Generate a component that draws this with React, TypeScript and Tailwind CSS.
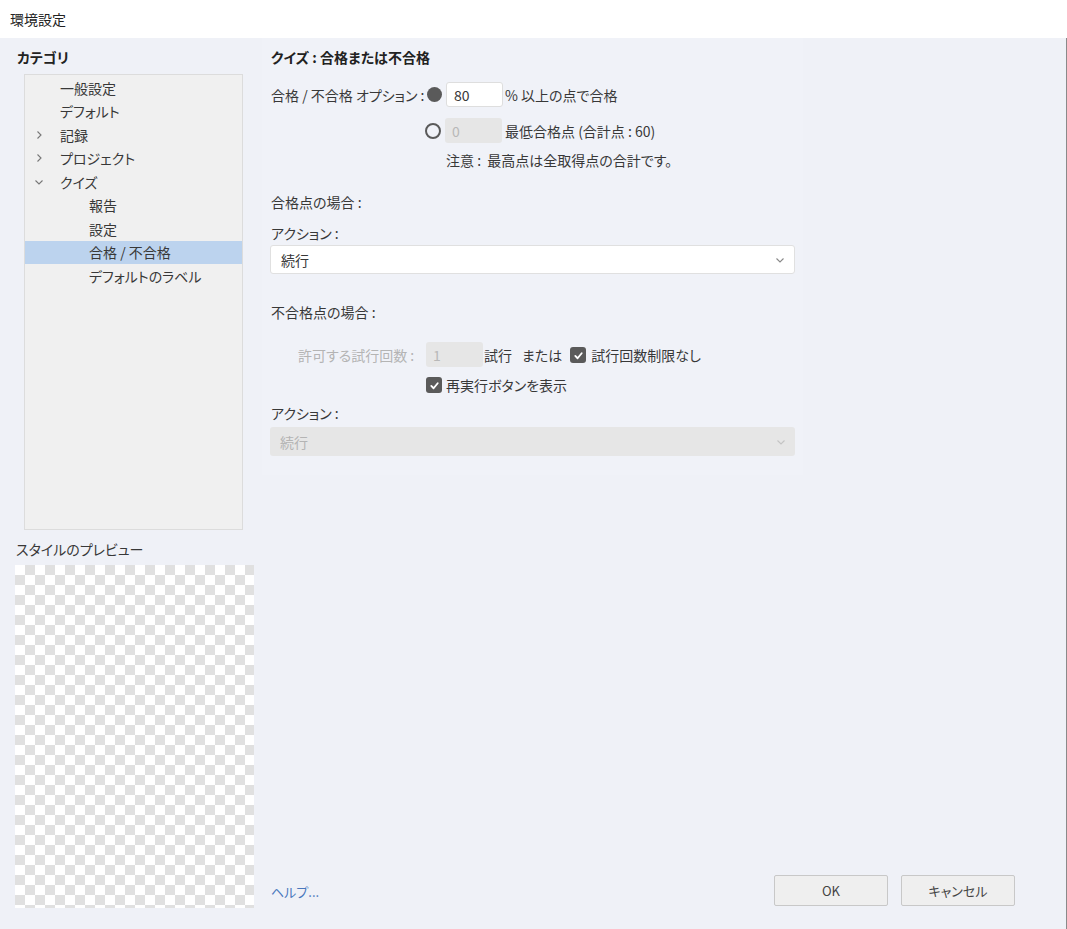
import React from 'react';

const font = "font-['Noto_Sans_CJK_JP','Noto_Sans',sans-serif] [font-feature-settings:'palt']";

const Chevron: React.FC<{ dir: 'right' | 'down'; className?: string }> = ({ dir, className }) => (
  <svg width="10" height="10" viewBox="0 0 10 10" className={className} fill="none" stroke="currentColor" strokeWidth="1.1">
    {dir === 'right' ? <polyline points="3.5,1.5 7,5 3.5,8.5" /> : <polyline points="1.5,3.5 5,7 8.5,3.5" />}
  </svg>
);

const Checkbox: React.FC = () => (
  <span className="inline-flex h-[16px] w-[16px] items-center justify-center rounded-[3px] bg-[#5a5a5a]">
    <svg width="11" height="11" viewBox="0 0 12 12" fill="none" stroke="white" strokeWidth="2" strokeLinecap="round" strokeLinejoin="round">
      <polyline points="2.5,6.5 5,9 9.5,3.5" />
    </svg>
  </span>
);

type Item = { label: string; level: 0 | 1; chevron?: 'right' | 'down'; selected?: boolean };

const ITEMS: Item[] = [
  { label: '一般設定', level: 0 },
  { label: 'デフォルト', level: 0 },
  { label: '記録', level: 0, chevron: 'right' },
  { label: 'プロジェクト', level: 0, chevron: 'right' },
  { label: 'クイズ', level: 0, chevron: 'down' },
  { label: '報告', level: 1 },
  { label: '設定', level: 1 },
  { label: '合格 / 不合格', level: 1, selected: true },
  { label: 'デフォルトのラベル', level: 1 },
];

const App: React.FC = () => {
  return (
    <div className={`flex h-screen w-full flex-col text-[14px] leading-[18px] text-[#383838] ${font}`}>
      {/* Title bar */}
      <div className="flex h-[38px] shrink-0 items-center bg-white pl-[10px] text-[#222]">環境設定</div>

      <div className="flex flex-1 border-r border-[#8a8a8a] bg-[#eff1f7]">
        {/* Left column */}
        <div className="flex w-[262px] shrink-0 flex-col pt-[10px]">
          <div className="pl-[17px] font-bold text-[#222]">カテゴリ</div>
          <div className="ml-[24px] mt-[8px] h-[456px] w-[219px] border border-[#dcdcdc] bg-[#f0f0f0] pt-[1px]">
            {ITEMS.map((it) => (
              <div
                key={it.label}
                className={`flex h-[23.5px] items-center ${it.selected ? 'bg-[#bcd3ee]' : ''}`}
              >
                <span className="flex w-[35px] justify-end pr-[16px] text-[#777]">
                  {it.chevron && <Chevron dir={it.chevron} />}
                </span>
                <span className={it.level === 1 ? 'pl-[29px]' : ''}>{it.label}</span>
              </div>
            ))}
          </div>
          <div className="mt-[10px] pl-[16px]">スタイルのプレビュー</div>
          <div className="ml-[15px] mt-[7px] h-[343px] w-[239px] bg-[conic-gradient(#e0e0e0_25%,#ffffff_0_50%,#e0e0e0_0_75%,#ffffff_0)] bg-[length:20px_20px]" />
        </div>

        {/* Right column */}
        <div className="flex flex-1 flex-col">
          <div className="w-[541px] bg-[#f0f2f8] px-[8px] pb-[19px] pt-[10px]">
            <div className="pl-[1px] font-bold text-[#222]">クイズ : 合格または不合格</div>

            <div className="mt-[16px] flex h-[25px] items-center pl-[1px]">
              <span className="w-[156px]">合格 / 不合格 オプション :</span>
              <span className="h-[15px] w-[15px] rounded-full bg-[#5a5a5a]" />
              <span className="ml-[4px] flex h-[25px] w-[57px] items-center rounded-[3px] border border-[#dedede] bg-white pl-[7px]">80</span>
              <span className="ml-[2px]">% 以上の点で合格</span>
            </div>

            <div className="mt-[11px] flex h-[25px] items-center pl-[155px]">
              <span className="h-[16px] w-[16px] rounded-full border-[2.5px] border-[#5a5a5a]" />
              <span className="ml-[4px] flex h-[25px] w-[57px] items-center rounded-[3px] bg-[#e6e6e6] pl-[7px] text-[#b8b8b8]">0</span>
              <span className="ml-[3px]">最低合格点 (合計点 : 60)</span>
            </div>

            <div className="mt-[8px] pl-[176px]">注意 :&nbsp; 最高点は全取得点の合計です。</div>

            <div className="mt-[24px] pl-[1px]">合格点の場合 :</div>
            <div className="mt-[13px] pl-[1px]">アクション :</div>
            <div className="mt-[3px] flex h-[29px] items-center justify-between rounded-[3px] border border-[#e0e0e0] bg-white pl-[10px] pr-[9px]">
              <span>続行</span>
              <Chevron dir="down" className="text-[#888]" />
            </div>

            <div className="mt-[29px] pl-[1px]">不合格点の場合 :</div>

            <div className="mt-[21px] flex h-[25px] items-center pl-[1px]">
              <span className="w-[155px] pl-[27px] text-[#b4b4b4]">許可する試行回数 :</span>
              <span className="flex h-[25px] w-[57px] items-center rounded-[3px] bg-[#e6e6e6] pl-[7px] text-[#b8b8b8]">1</span>
              <span className="ml-[1px]">試行</span>
              <span className="ml-[10px]">または</span>
              <span className="ml-[8px]"><Checkbox /></span>
              <span className="ml-[5px]">試行回数制限なし</span>
            </div>

            <div className="mt-[9px] flex h-[18px] items-center pl-[156px]">
              <Checkbox />
              <span className="ml-[4px]">再実行ボタンを表示</span>
            </div>

            <div className="mt-[10px] pl-[1px]">アクション :</div>
            <div className="mt-[5px] flex h-[29px] items-center justify-between rounded-[3px] bg-[#e6e6e6] pl-[10px] pr-[9px] text-[#b4b4b4]">
              <span>続行</span>
              <Chevron dir="down" className="text-[#c4c4c4]" />
            </div>
          </div>

          <div className="flex-1" />

          <div className="flex items-end justify-between pb-[23px] pl-[9px] pr-[51px]">
            <span className="mb-[5px] text-[13px] text-[#4a78bd]">ヘルプ...</span>
            <div className="flex gap-[13px]">
              <button className="h-[31px] w-[114px] rounded-[2px] border border-[#c8c8c8] bg-[#efefef] text-[13px] text-[#444]">OK</button>
              <button className="h-[31px] w-[114px] rounded-[2px] border border-[#c8c8c8] bg-[#efefef] text-[13px] text-[#444]">キャンセル</button>
            </div>
          </div>
        </div>
      </div>
    </div>
  );
};

export default App;
